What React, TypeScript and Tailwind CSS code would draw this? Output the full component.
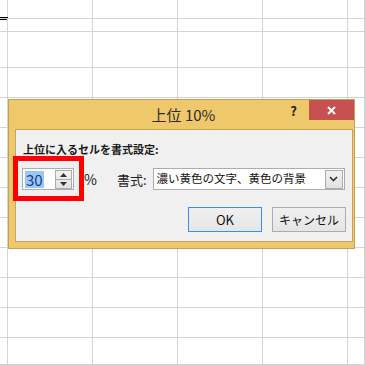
const jp = { fontFamily: '"Noto Sans CJK JP", "Noto Sans", sans-serif' };

const colWidths = [8, 85, 85, 85, 85, 17];
const rowHeights = [19, 13, 36, 30, 30, 30, 30, 30, 30, 30, 30, 30, 27];

function Grid() {
  return (
    <div className="flex flex-col">
      {rowHeights.map((h, r) => (
        <div key={r} className="flex" style={{ height: h }}>
          {colWidths.map((w, c) => (
            <div
              key={c}
              className="relative shrink-0 border-b border-r border-[#d4d4d4]"
              style={{ width: w }}
            >
              {r === 0 && c === 0 ? (
                <div className="absolute -bottom-[2px] left-0 h-[3px] w-[8px] border-y border-black" />
              ) : null}
            </div>
          ))}
        </div>
      ))}
    </div>
  );
}

function SpinButtons() {
  return (
    <div className="flex h-[19px] w-[17px] flex-col border border-[#acacac] bg-gradient-to-b from-[#f2f2f2] to-[#e2e2e2]">
      <div className="flex flex-1 items-center justify-center border-b border-[#acacac]">
        <svg width="7" height="4" viewBox="0 0 7 4">
          <path d="M0 4 L3.5 0 L7 4 Z" fill="#333" />
        </svg>
      </div>
      <div className="flex flex-1 items-center justify-center">
        <svg width="7" height="4" viewBox="0 0 7 4">
          <path d="M0 0 L3.5 4 L7 0 Z" fill="#333" />
        </svg>
      </div>
    </div>
  );
}

function Dialog() {
  return (
    <div className="absolute left-[8px] top-[99px] flex h-[150px] w-[347px] flex-col border border-[#c0a05c] bg-[#f0c86c]">
      <div className="relative flex h-[29px] shrink-0 items-center justify-center">
        <span className="pl-[4px] text-[15px] leading-none text-[#2b2b2b]" style={jp}>
          上位 10%
        </span>
        <span
          className="absolute right-[57px] top-[4px] text-[13px] font-bold leading-none text-[#222]"
          style={jp}
        >
          ?
        </span>
        <div className="absolute right-0 top-0 flex h-[20px] w-[45px] items-center justify-center bg-[#c75050]">
          <svg width="9" height="9" viewBox="0 0 9 9">
            <path d="M1 1 L8 8 M8 1 L1 8" stroke="#fff" strokeWidth="2" />
          </svg>
        </div>
      </div>

      <div className="mb-[6px] ml-[6px] mr-[1px] flex flex-1 flex-col border border-[#c9a45e] bg-[#f0f0f0]">
        <div className="h-[38px] shrink-0 pl-[7px] pt-[6px]">
          <span
            className="whitespace-nowrap text-[11px] font-bold leading-[16px] text-[#1a1a1a]"
            style={jp}
          >
            上位に入るセルを書式設定:
          </span>
        </div>

        <div className="flex h-[22px] items-center">
          <div className="ml-[6px] flex h-[22px] w-[52px] items-center justify-between border border-[#abadb3] bg-white pl-[2px] pr-[1px]">
            <span
              className="bg-[#99c9f2] px-[1px] text-[15px] leading-[17px] text-[#1b3a8a]"
              style={jp}
            >
              30
            </span>
            <SpinButtons />
          </div>
          <span className="ml-[10px] text-[14px] leading-none text-[#222]" style={jp}>
            %
          </span>
          <span className="ml-[20px] text-[13px] leading-none text-[#222]" style={jp}>
            書式:
          </span>
          <div className="ml-[6px] flex h-[22px] w-[192px] items-center justify-between border border-[#abadb3] bg-white pl-[3px] pr-[1px]">
            <span className="whitespace-nowrap text-[11.5px] leading-none text-[#111]" style={jp}>
              濃い黄色の文字、黄色の背景
            </span>
            <div className="flex h-[19px] w-[18px] items-center justify-center border border-[#acacac] bg-gradient-to-b from-[#f2f2f2] to-[#e0e0e0]">
              <svg width="9" height="6" viewBox="0 0 9 6">
                <path d="M1 1 L4.5 4.5 L8 1" stroke="#333" strokeWidth="1.6" fill="none" />
              </svg>
            </div>
          </div>
        </div>

        <div className="mt-[17px] flex justify-end gap-[10px] pr-[6px]">
          <button
            type="button"
            className="flex h-[25px] w-[74px] items-center justify-center border border-[#3c8fe6] bg-gradient-to-b from-[#f0f0f0] to-[#e5e5e5] text-[13px] text-[#111]"
            style={jp}
          >
            OK
          </button>
          <button
            type="button"
            className="flex h-[25px] w-[74px] items-center justify-center border border-[#acacac] bg-gradient-to-b from-[#f0f0f0] to-[#e5e5e5] text-[12px] text-[#111]"
            style={jp}
          >
            キャンセル
          </button>
        </div>
      </div>

      <div className="pointer-events-none absolute left-[4px] top-[56px] h-[45px] w-[71px] border-[5px] border-[#ff0000]" />
    </div>
  );
}

export default function App() {
  return (
    <div className="relative h-[365px] w-[365px] overflow-hidden bg-white">
      <Grid />
      <Dialog />
    </div>
  );
}
